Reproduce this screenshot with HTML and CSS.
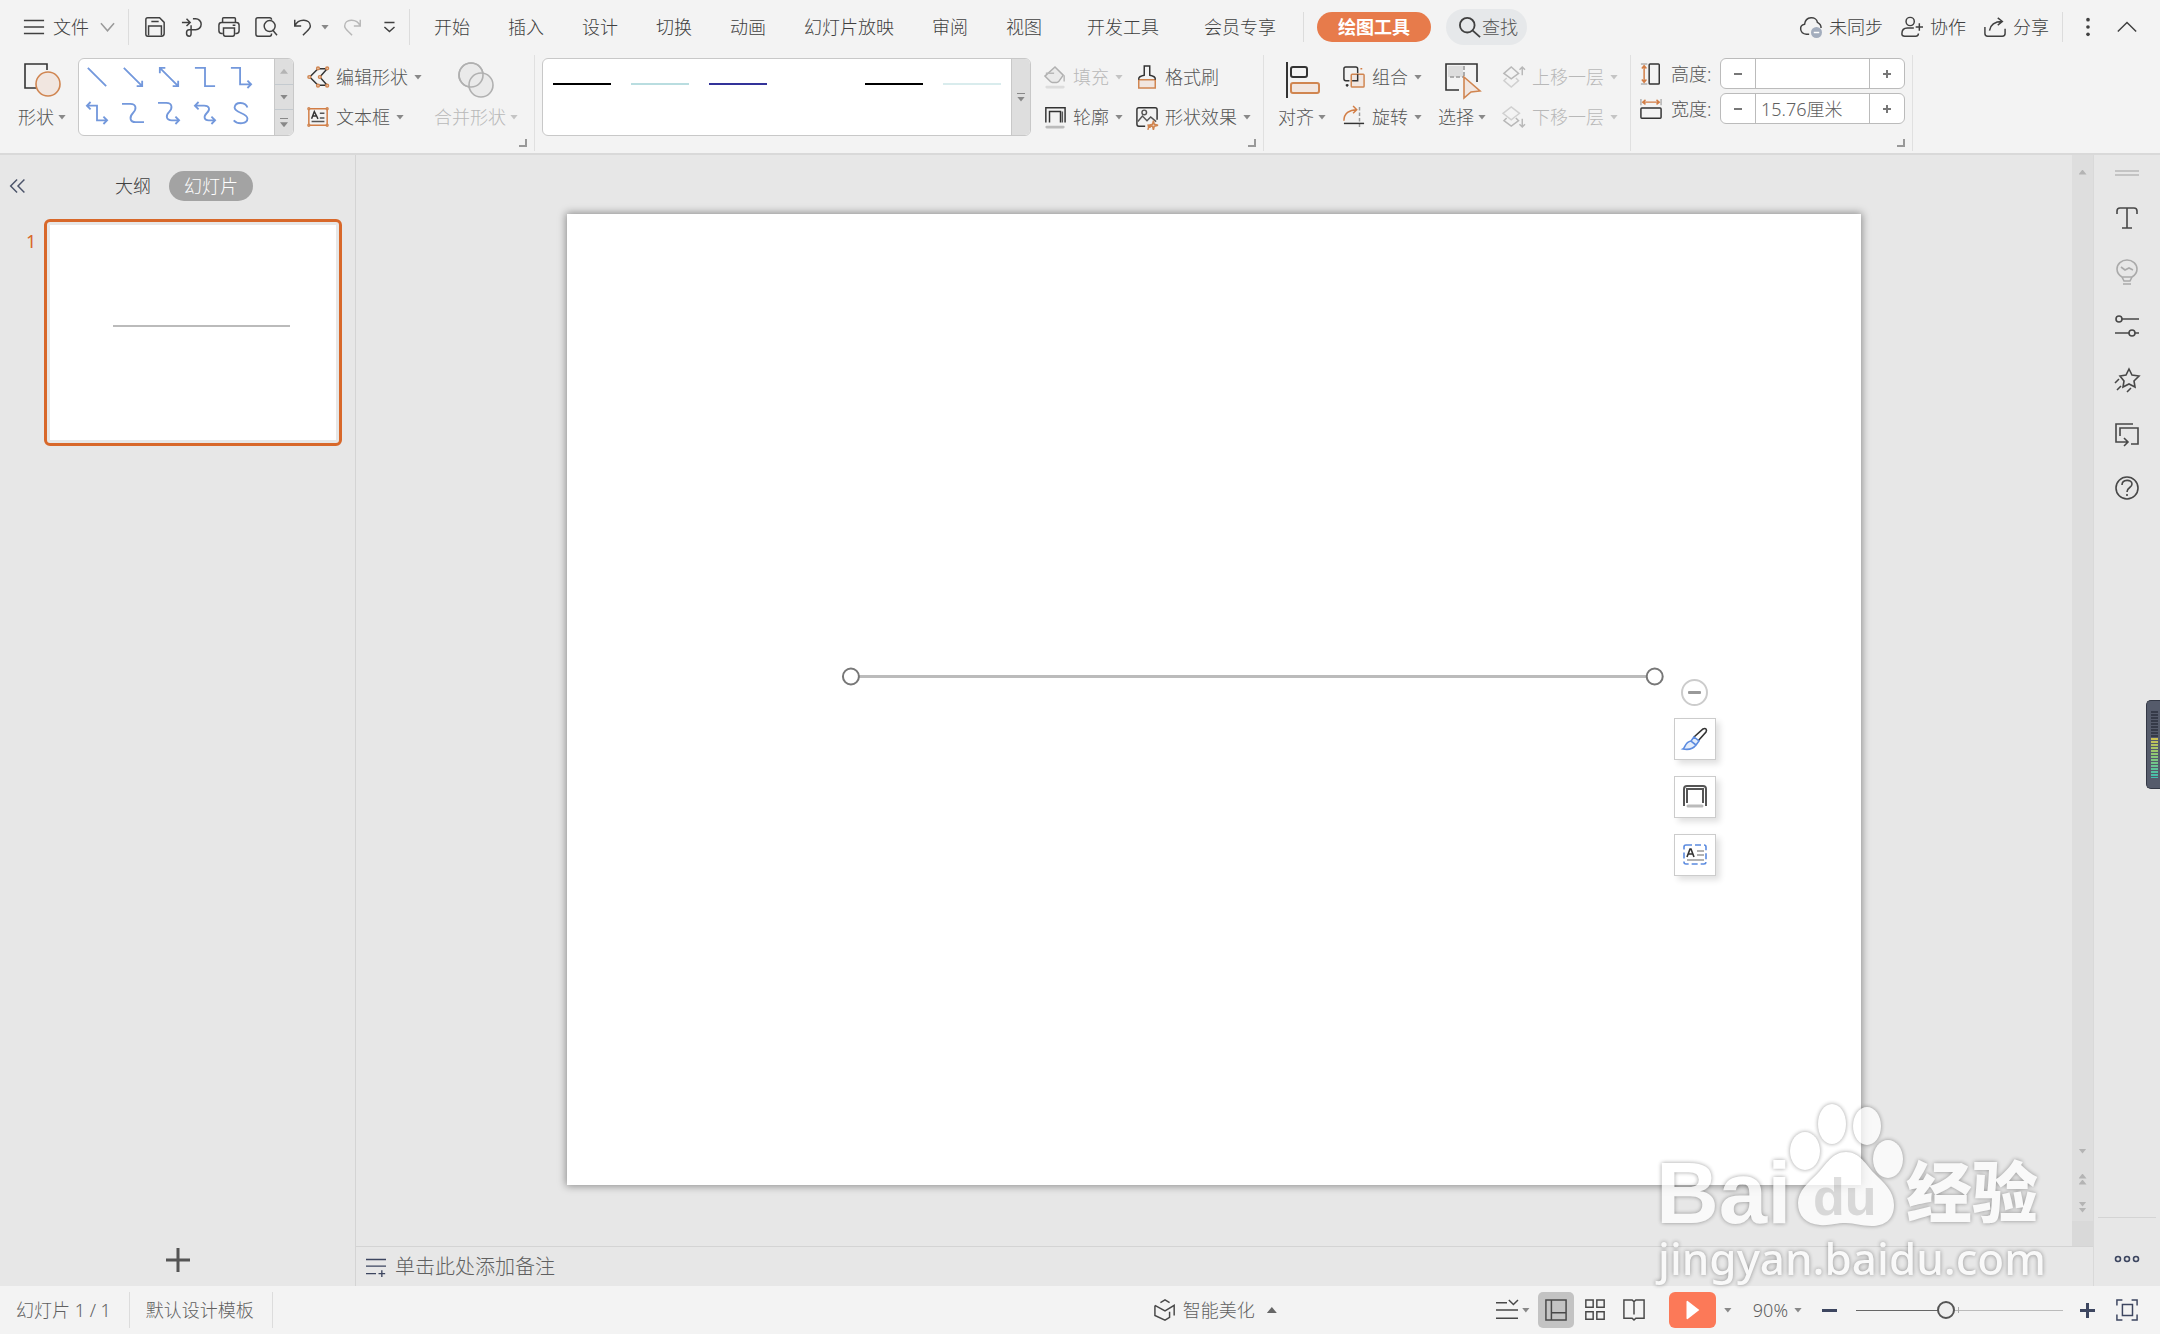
FILE: index.html
```html
<!DOCTYPE html>
<html lang="zh-CN">
<head>
<meta charset="utf-8">
<meta name="viewport" content="width=device-width, initial-scale=1">
<title>演示文稿 - 绘图工具</title>
<link rel="stylesheet" href="styles.css">
</head>
<body>
<header class="topbar">
  <button class="file-menu">
    <svg class="icon" viewBox="0 0 24 24"><path d="M1 5h22M1 12h22M1 19h22"/></svg>
    <span>文件</span>
    <svg class="chevron" viewBox="0 0 16 16"><path d="M1 4l7 8 7-8"/></svg>
  </button>
  <span class="divider"></span>
  <div class="quick-tools">
    <button class="tool" aria-label="保存"><svg class="icon" viewBox="0 0 24 24"><path d="M4 2h13l5 5v12q0 3-3 3H4q-2 0-2-2V4q0-2 2-2zM5 21V11h14v10M8 6h8"/></svg></button>
    <button class="tool" aria-label="输出为PDF"><svg class="icon" viewBox="0 0 24 24"><path d="M1 7h8M6 3l4 4-4 4M13 3h3a6 6 0 0 1 0 12H9q-3 0-3 3.500t3 3.500q2 0 2-3V10"/></svg></button>
    <button class="tool" aria-label="打印"><svg class="icon" viewBox="0 0 24 24"><path d="M5 7V3q0-1 1-1h12q1 0 1 1v4M5 19H4q-3 0-3-3v-6q0-3 3-3h16q3 0 3 3v6q0 3-3 3h-1M6 13h12v7q0 2-2 2H8q-2 0-2-2zM16 10h3"/></svg></button>
    <button class="tool" aria-label="打印预览"><svg class="icon" viewBox="0 0 24 24"><path d="M18 19v1q0 2-2 2H3q-2 0-2-2V4q0-2 2-2h13q2 0 2 2"/><circle cx="16" cy="11" r="6"/><path d="M19 15l5 6"/></svg></button>
    <button class="tool" aria-label="撤销"><svg class="icon" viewBox="0 0 24 24"><path d="M3 4v7h7M3 11c4-9 17-8 17 0 0 4-5 6-8 10"/></svg></button>
    <button class="tool-caret" aria-label="撤销列表"><i class="caret"></i></button>
    <button class="tool muted" aria-label="恢复"><svg class="icon" viewBox="0 0 24 24"><path d="M21 4v7h-7M21 11C17 2 4 3 4 11c0 4 5 6 8 10"/></svg></button>
    <button class="tool" aria-label="自定义快速访问工具栏"><svg class="icon" viewBox="0 0 24 24"><path d="M7 7h11M7 12l5.500 5 5.500-5"/></svg></button>
  </div>
  <span class="divider"></span>
  <nav class="tabs">
    <a href="#home">开始</a><a href="#insert">插入</a><a href="#design">设计</a><a href="#transition">切换</a><a href="#animation">动画</a><a href="#show">幻灯片放映</a><a href="#review">审阅</a><a href="#view">视图</a><a class="wide" href="#developer">开发工具</a><a class="wide" href="#member">会员专享</a>
  </nav>
  <span class="divider short"></span>
  <button class="context-tab">绘图工具</button>
  <button class="search"><svg class="icon" viewBox="0 0 24 24"><circle cx="9" cy="10" r="8"/><path d="M15 16l8 7"/></svg>查找</button>
  <div class="account">
    <button class="action"><svg class="icon" viewBox="0 0 24 24"><path d="M10 20H7C-1 19-1 10 5 9 6 0 18 0 19 7q4 2 4 6"/><circle class="badge" cx="18" cy="18" r="6"/><path class="badge-mark" d="M15 18h6"/></svg>未同步</button>
    <button class="action"><svg class="icon" viewBox="0 0 24 24"><circle cx="10" cy="6" r="4.500"/><path d="M14 13H7q-6 0-6 6v1q0 2 3 2h12q3 0 3-3M16 12h8M20 8v8"/></svg>协作</button>
    <button class="action"><svg class="icon" viewBox="0 0 24 24"><path d="M1 12v7q0 3 3 3h16q3 0 3-3v-5M6 16c1-7 5-10 14-10M15 2l5 4-5 4"/></svg>分享</button>
  </div>
  <span class="divider short"></span>
  <div class="window-tools">
    <button class="bare" aria-label="更多"><svg class="icon solid" viewBox="0 0 24 24"><circle cx="12" cy="4" r="2"/><circle cx="12" cy="12" r="2"/><circle cx="12" cy="20" r="2"/></svg></button>
    <button class="bare" aria-label="收起功能区"><svg class="icon" viewBox="0 0 24 24"><path d="M2 17L12 7l10 10"/></svg></button>
  </div>
</header>

<section class="ribbon" aria-label="绘图工具">
  <div class="group group-shapes">
    <button class="big">
      <svg class="icon-big" viewBox="0 0 36 36"><path class="ink" d="M23 8V2H1v24h11"/><circle class="accent-fill" cx="24" cy="22" r="12"/></svg>
      <span class="big-label">形状<i class="caret"></i></span>
    </button>
    <div class="gallery">
      <div class="shape-grid">
        <button aria-label="直线"><svg viewBox="0 0 24 24"><path d="M2 2l20 20"/></svg></button>
        <button aria-label="箭头"><svg viewBox="0 0 24 24"><path d="M2 2l20 20M22 16v6h-6"/></svg></button>
        <button aria-label="双箭头"><svg viewBox="0 0 24 24"><path d="M2 2l20 20M22 16v6h-6M8 2H2v6"/></svg></button>
        <button aria-label="肘形连接符"><svg viewBox="0 0 24 24"><path d="M1 2h11v20h11"/></svg></button>
        <button aria-label="肘形箭头连接符"><svg viewBox="0 0 24 24"><path d="M1 2h10v18h12M19 16l4 4-4 4"/></svg></button>
        <button aria-label="肘形双箭头连接符"><svg viewBox="0 0 24 24"><path d="M1 4h11v16h11M19 16l4 4-4 4M5 0L1 4l4 4"/></svg></button>
        <button aria-label="曲线连接符"><svg viewBox="0 0 24 24"><path d="M0 2h9c7 0 7 6 3 10s-4 10 3 10h9"/></svg></button>
        <button aria-label="曲线箭头连接符"><svg viewBox="0 0 24 24"><path d="M0 1h9c7 0 7 6 3 10s-3 9 3 9h8M19 16l4 4-4 4"/></svg></button>
        <button aria-label="曲线双箭头连接符"><svg viewBox="0 0 24 24"><path d="M1 4h10c6 0 7 4 3 8s-3 8 2 8h7M19 16l4 4-4 4M5 0L1 4l4 4"/></svg></button>
        <button aria-label="曲线"><svg viewBox="0 0 24 24"><path d="M19 6C17 0 6-1 5 6c0 6 14 6 14 12 0 6-10 7-15 2"/></svg></button>
      </div>
      <div class="gallery-scroll">
        <button aria-label="上一行"><i class="caret up pale"></i></button>
        <button aria-label="下一行"><i class="caret"></i></button>
        <button aria-label="全部形状"><i class="bar"></i><i class="caret"></i></button>
      </div>
    </div>
    <div class="stack">
      <button class="cmd">
        <svg class="icon" viewBox="0 0 24 24"><path class="ink" d="M12 3h10L14 12l8 9H12L3 12z"/><g class="accent-fill"><circle cx="12" cy="2.500" r="1.500"/><circle cx="22" cy="2.500" r="1.500"/><circle cx="14" cy="12" r="1.500"/><circle cx="22" cy="21.500" r="1.500"/><circle cx="12" cy="21.500" r="1.500"/><circle cx="2.500" cy="12" r="1.500"/></g></svg>
        <span>编辑形状</span><i class="caret"></i>
      </button>
      <button class="cmd">
        <svg class="icon" viewBox="0 0 24 24"><path class="accent" d="M2 3h20v18H2z"/><g class="accent-fill"><circle cx="2" cy="3" r="1"/><circle cx="22" cy="3" r="1"/><circle cx="2" cy="21" r="1"/><circle cx="22" cy="21" r="1"/></g><path class="ink" d="M5 14l3-8 4 8M6 11h4"/><path d="M14 8h5M14 13h5M5 17h14"/></svg>
        <span>文本框</span><i class="caret"></i>
      </button>
    </div>
    <button class="big muted" disabled>
      <svg class="icon-big" viewBox="0 0 36 36"><circle class="grey-fill" cx="13" cy="13" r="12"/><circle class="grey-fill" cx="23" cy="23" r="12"/><circle class="grey-line" cx="13" cy="13" r="12"/></svg>
      <span class="big-label">合并形状<i class="caret"></i></span>
    </button>
    <button class="launcher" aria-label="形状设置"></button>
  </div>

  <div class="group group-styles">
    <div class="gallery style-gallery">
      <div class="line-grid">
        <button class="line black" aria-label="黑色线条"></button>
        <button class="line teal" aria-label="青色线条"></button>
        <button class="line blue" aria-label="蓝色线条"></button>
        <button class="line white" aria-label="白色线条"></button>
        <button class="line black" aria-label="黑色细线"></button>
        <button class="line mint" aria-label="浅青线条"></button>
      </div>
      <div class="gallery-scroll"><button aria-label="全部样式"><i class="bar"></i><i class="caret"></i></button></div>
    </div>
    <div class="stack">
      <button class="cmd muted" disabled>
        <svg class="icon" viewBox="0 0 24 24"><path class="grey-fill" d="M1 11L12 1l9 9-5 7q-1 1-2 1H9q-1 0-2-1z"/><path d="M2 8h9M22 10v7"/><path class="under pale-under" d="M3 23h18"/></svg>
        <span>填充</span><i class="caret"></i>
      </button>
      <button class="cmd">
        <svg class="icon" viewBox="0 0 24 24"><path class="ink" d="M2 18V2h21v16M6 18V6h12v12"/><path d="M20 6v12"/><path class="under" d="M3 23h18"/></svg>
        <span>轮廓</span><i class="caret"></i>
      </button>
    </div>
    <div class="stack">
      <button class="cmd">
        <svg class="icon" viewBox="0 0 24 24"><path class="accent-fill" d="M3 15h18v9H3z"/><path class="ink" d="M3 15v-1q0-3 6-4V0h6v10q6 1 6 4v1"/></svg>
        <span>格式刷</span>
      </button>
      <button class="cmd">
        <svg class="icon" viewBox="0 0 24 24"><path class="ink" d="M10 22H3q-2 0-2-2V4q0-2 2-2h18q2 0 2 2v11"/><circle cx="9" cy="7" r="2.500"/><path d="M2 17l5-6 5 5 4-4 6 5"/><path class="accent-fill" d="M19 16l1 4 4 1-4 1-1 4-1-4-4-1 4-1zM13 20l.6 2.400L16 23l-2.400.6L13 26"/></svg>
        <span>形状效果</span><i class="caret"></i>
      </button>
    </div>
    <button class="launcher" aria-label="样式设置"></button>
  </div>

  <div class="group group-arrange">
    <button class="big">
      <svg class="icon-big" viewBox="0 0 36 36"><path class="ink thick" d="M3 0v36"/><rect class="ink thick" x="7" y="5" width="16" height="10" rx="2"/><rect class="accent-fill thick" x="7" y="21" width="28" height="10" rx="2"/></svg>
      <span class="big-label">对齐<i class="caret"></i></span>
    </button>
    <div class="stack">
      <button class="cmd">
        <svg class="icon" viewBox="0 0 24 24"><path class="ink" d="M7 16H3q-2 0-2-2V3q0-2 2-2h11q2 0 2 2v5M3 21h3M4.500 19.500v3"/><rect class="accent-fill" x="9" y="9" width="14" height="14" rx="1"/><path class="ink" d="M10 16h6V9"/><path class="accent" d="M19 3h2"/></svg>
        <span>组合</span><i class="caret"></i>
      </button>
      <button class="cmd">
        <svg class="icon" viewBox="0 0 24 24"><path class="accent" d="M1 16C1 8 7 4 15 4M11 0l4 4-4 4"/><path class="dashed" d="M18 1v23"/><path class="ink" d="M1 19h22"/></svg>
        <span>旋转</span><i class="caret"></i>
      </button>
    </div>
    <button class="big">
      <svg class="icon-big" viewBox="0 0 36 36"><path class="shade" d="M4 4h15v11H4z"/><path class="ink" d="M15 28H2V2h31v18"/><path class="dashed" d="M20 4v11M6 15h14"/><path class="accent-fill" d="M20 15l16 14-9 1-7 6z"/></svg>
      <span class="big-label">选择<i class="caret"></i></span>
    </button>
    <div class="stack">
      <button class="cmd muted" disabled>
        <svg class="icon" viewBox="0 0 24 24"><path d="M1 8l8-7 8 7-8 6zM21 10V1M18 4l3-3 3 3"/><path class="pale-line" d="M4 13l-3 3 8 7 8-7-3-3"/></svg>
        <span>上移一层</span><i class="caret"></i>
      </button>
      <button class="cmd muted" disabled>
        <svg class="icon" viewBox="0 0 24 24"><path class="pale-line" d="M0 8l9-7 9 7-9 7z"/><path d="M4 13l-3 3 8 6 8-6-3-3M21 14v9M18 20l3 3 3-3"/></svg>
        <span>下移一层</span><i class="caret"></i>
      </button>
    </div>
  </div>

  <div class="group group-size">
    <div class="size-row">
      <svg class="icon" viewBox="0 0 24 24"><path class="grey-line" d="M1 1h7M1 23h7"/><path class="accent" d="M4.500 3v18M2 6l2.500-3L7 6M2 18l2.500 3L7 18"/><rect class="ink" x="10" y="1" width="11" height="22" rx="1"/></svg>
      <label for="height">高度:</label>
      <div class="spin"><button aria-label="减小高度"><i class="minus"></i></button><input id="height" type="text" value=""><button aria-label="增大高度"><i class="plus"></i></button></div>
    </div>
    <div class="size-row">
      <svg class="icon" viewBox="0 0 24 24"><path class="grey-line" d="M1 1v7M23 1v7"/><path class="accent" d="M3 4.500h18M6 2L3 4.500 6 7M18 2l3 2.500L18 7"/><rect class="ink" x="1" y="11" width="22" height="11" rx="1"/></svg>
      <label for="width">宽度:</label>
      <div class="spin"><button aria-label="减小宽度"><i class="minus"></i></button><input id="width" type="text" value="15.76厘米"><button aria-label="增大宽度"><i class="plus"></i></button></div>
    </div>
    <button class="launcher" aria-label="大小设置"></button>
  </div>
</section>

<main class="workspace">
  <aside class="slides-panel">
    <div class="panel-head">
      <button class="bare collapse" aria-label="收起"><svg class="icon" viewBox="0 0 24 24"><path d="M11 5l-7 7 7 7M19 5l-7 7 7 7"/></svg></button>
      <button class="bare outline-tab">大纲</button>
      <button class="slides-tab">幻灯片</button>
    </div>
    <ol class="thumbs">
      <li><span class="number">1</span><a class="thumb" href="#slide-1" aria-label="幻灯片 1"><span class="thumb-slide"><i></i></span></a></li>
    </ol>
    <button class="bare add-slide" aria-label="新建幻灯片"><svg class="icon" viewBox="0 0 24 24"><path d="M0 12h24M12 0v24"/></svg></button>
  </aside>

  <div class="editor">
    <div class="stage">
      <div class="canvas">
        <article class="slide" id="slide-1">
          <svg class="drawing" viewBox="0 0 1295 971"><path d="M284 462.500h804"/><circle cx="284" cy="462.500" r="8"/><circle cx="1088" cy="462.500" r="8"/></svg>
          <div class="float-tools">
            <button class="float-close" aria-label="收起工具"><i></i></button>
            <button class="float-button" aria-label="形状样式"><svg class="icon" viewBox="0 0 24 24"><path class="ink" d="M11 10l9-8q2-1 3 0t0 3l-8 9"/><path class="blue-fill" d="M11 10l5 4-3 4-5-4zM8 14l5 4c-3 4-8 5-13 4 2-1 2-7 8-8z"/></svg></button>
            <button class="float-button" aria-label="形状轮廓"><svg class="icon" viewBox="0 0 24 24"><path class="frame" d="M1 21V4q0-3 3-3h16q3 0 3 3v17M4 18V4h16v14"/><path class="under" d="M5 21h14"/></svg></button>
            <button class="float-button" aria-label="编辑文字"><svg class="icon" viewBox="0 0 24 24"><rect class="blue-dash" x="1" y="2" width="22" height="19" rx="2"/><path class="ink" d="M4 14l3-8h1l3 8M5 11h5"/><path d="M14 8h7M14 12h7M4 17h17"/></svg></button>
          </div>
        </article>
      </div>
      <div class="scrollbar">
        <button aria-label="向上滚动"><i class="caret up pale"></i></button>
        <span class="scroll-track"></span>
        <button aria-label="向下滚动"><i class="caret pale"></i></button>
        <button aria-label="上一张"><i class="caret up pale"></i><i class="caret up pale"></i></button>
        <button aria-label="下一张"><i class="caret pale"></i><i class="caret pale"></i></button>
        <span class="scroll-end"></span>
      </div>
    </div>
    <div class="notes">
      <svg class="icon navy" viewBox="0 0 24 24"><path d="M0 3h24M0 11h24M0 20h12M15 20h8M19 16v8"/></svg>
      <input type="text" aria-label="备注" placeholder="单击此处添加备注">
    </div>
  </div>

  <aside class="sidebar">
    <span class="grip"></span>
    <button class="bare" aria-label="文字"><svg class="icon" viewBox="0 0 24 24"><path d="M2 8V5q0-3 3-3h14q3 0 3 3v3M12 2v20M7 22h10"/></svg></button>
    <button class="bare muted" aria-label="灵感"><svg class="icon" viewBox="0 0 24 24"><path d="M7 17q-5-3-5-8a10 9 0 0 1 20 0q0 5-5 8zM7 17l2 4h6l2-4M8 24h8M6 7l4 3 4-2 4 2"/></svg></button>
    <button class="bare" aria-label="属性"><svg class="icon" viewBox="0 0 24 24"><circle cx="4" cy="5" r="3"/><path d="M7 5h17M0 19h14M20 19h4"/><circle cx="17" cy="19" r="3"/></svg></button>
    <button class="bare" aria-label="动画"><svg class="icon" viewBox="0 0 24 24"><path d="M14 1l3 6 7 1-5 5 1 6-6-3-6 3 1-6-4-5 6-1zM4 11l-4 4M6 18l-4 4M16 20l-4 4"/></svg></button>
    <button class="bare" aria-label="切换"><svg class="icon" viewBox="0 0 24 24"><path d="M18 2H1v18h12M9 16l4 4-4 4M5 14V6h18v16h-7"/></svg></button>
    <button class="bare" aria-label="帮助"><svg class="icon" viewBox="0 0 24 24"><circle cx="12" cy="12" r="11"/><path d="M7 9c0-6 10-6 10-1 0 4-5 3-5 8M12 18v2"/></svg></button>
    <button class="bare more" aria-label="更多"><svg class="icon navy" viewBox="0 0 24 24"><circle cx="3" cy="12" r="2.500"/><circle cx="12" cy="12" r="2.500"/><circle cx="21" cy="12" r="2.500"/></svg></button>
    <span class="meter"><i></i></span>
  </aside>

  <svg class="watermark" viewBox="0 0 400 205" aria-hidden="true">
    <text class="wm-bai" x="6" y="128">Bai</text>
    <ellipse cx="155" cy="56" rx="15" ry="19"/><ellipse cx="182" cy="29" rx="14" ry="20"/><ellipse cx="217" cy="31" rx="14" ry="19"/><ellipse cx="238" cy="64" rx="15" ry="19"/>
    <path d="M196 57C210 57 216 70 224 78C234 88 244 96 244 110C244 125 234 131 222 131C210 131 205 128 196 128C185 128 180 131 170 130C156 129 148 121 148 108C148 96 158 88 168 78C176 70 182 57 196 57Z"/>
    <text class="wm-du" x="163" y="120">du</text>
    <text class="wm-cjk" x="256" y="122">经验</text>
    <text class="wm-url" x="8" y="180">jingyan.baidu.com</text>
  </svg>
</main>

<footer class="status">
  <span class="status-item">幻灯片 1 / 1</span>
  <span class="status-item">默认设计模板</span>
  <button class="smart"><svg class="icon" viewBox="0 0 24 24"><path d="M7 4l5-3 5 3M1 7v11l11 5 5-3v-6M1 7l11 6 10-6v11"/></svg>智能美化<i class="caret up"></i></button>
  <div class="view-tools">
    <button class="view-menu" aria-label="视图选项"><svg class="icon" viewBox="0 0 24 24"><path d="M0 4h12M0 12h24M0 21h24M14 1l5 5 5-5"/></svg><i class="caret"></i></button>
    <button class="view active" aria-label="普通视图"><svg class="icon" viewBox="0 0 24 24"><path d="M1 1h22v22H1zM7 1v22M7 15h16"/></svg></button>
    <button class="view" aria-label="幻灯片浏览"><svg class="icon" viewBox="0 0 24 24"><path d="M2 1h8v8H2zM14 1h8v8h-8zM2 14h8v8H2zM14 14h8v8h-8z"/></svg></button>
    <button class="view" aria-label="阅读视图"><svg class="icon" viewBox="0 0 24 24"><path d="M12 3v14M12 3l-2-2H1v20h9l2 2 2-2h9V1h-9z"/></svg></button>
    <button class="play" aria-label="放映"><svg viewBox="0 0 24 24"><path d="M6 3q0-1 1-1l13 10L7 22q-1 0-1-1z"/></svg></button>
    <button class="bare play-caret" aria-label="放映选项"><i class="caret"></i></button>
    <button class="zoom-level">90%<i class="caret"></i></button>
    <button class="bare step navy" aria-label="缩小"><i class="minus"></i></button>
    <input class="zoom-slider" type="range" min="0" max="100" value="43" aria-label="缩放">
    <button class="bare step navy" aria-label="放大"><i class="plus"></i></button>
    <button class="bare fit" aria-label="适应窗口"><svg class="icon navy" viewBox="0 0 24 24"><path d="M7 1H1v6M17 1h6v6M1 17v6h6M23 17v6h-6M7 6h11v12H7z"/></svg></button>
  </div>
</footer>
</body>
</html>
```
FILE: styles.css
```css
* { box-sizing: border-box; }

body {
  margin: 0;
  min-height: 100vh;
  display: flex;
  flex-direction: column;
  background: #e7e7e7;
  color: #404040;
  font: 300 18px/24px "Noto Sans", "Noto Sans CJK SC", sans-serif;
  white-space: nowrap;
}

button, input { font: inherit; color: inherit; }
button { display: flex; align-items: center; justify-content: center; margin: 0; padding: 0; border: 0; background: none; }
a { color: inherit; text-decoration: none; }

svg { display: block; overflow: visible; flex: none; fill: none; stroke: currentColor; stroke-width: 1.6; }
.icon { width: 22px; height: 22px; margin: 0 1px; }
.icon-big { width: 36px; height: 36px; }
.solid { fill: currentColor; stroke: none; }
.ink { stroke: #333; }
.frame { stroke: #555; stroke-width: 2; }
.thick { stroke-width: 2; }
.accent { stroke: #d27d45; }
.accent-fill { stroke: #d08550; fill: #f1e6e0; }
.grey-fill { stroke: #b0b0b0; fill: #eaeaea; }
.grey-line { stroke: #b0b0b0; }
.pale-line { stroke: #d0d0d0; }
.shade { fill: #ddd; stroke: none; }
.dashed { stroke: #999; stroke-dasharray: 4 2; }
.under { stroke: #bbb; stroke-width: 3; stroke-linecap: round; }
.pale-under { stroke: #dcdcdc; }
.blue-fill { stroke: #5b8be0; fill: #e4edfb; }
.blue-dash { stroke: #5b8be0; stroke-dasharray: 6 3; }
.badge { fill: #a3adbd; stroke: none; }
.badge-mark { stroke: #fff; }
.navy { color: #3d4660; }

.caret { flex: none; width: 8px; height: 5px; background: #888; clip-path: polygon(0 0, 100% 0, 50% 100%); }
.caret.up { clip-path: polygon(0 100%, 100% 100%, 50% 0); }
.caret.pale { background: #b4b4b4; }
.muted { color: #b8b8b8; }
.muted .caret { background: #c4c4c4; }
.minus, .plus { width: 8px; height: 2px; background: currentColor; position: relative; }
.plus::after { content: ""; position: absolute; inset: 0; background: inherit; transform: rotate(90deg); }

/* top bar */
.topbar { display: flex; align-items: center; height: 54px; padding: 0 21px 0 22px; background: #f3f3f3; }
.divider { width: 1px; height: 36px; background: #dcdcdc; }
.divider.short { height: 30px; }
.file-menu { gap: 7px; margin-right: 13px; }
.chevron { width: 15px; height: 16px; margin-left: 4px; color: #999; }
.quick-tools { display: flex; align-items: center; margin: 0 2px 0 7px; }
.tool { width: 37px; height: 36px; }
.tool-caret { width: 12px; height: 36px; justify-content: flex-start; }
.tabs { display: flex; gap: 38px; margin: 0 27px 0 24px; }
.tabs .wide { margin-left: 7px; }
.context-tab { height: 30px; margin-left: 13px; padding: 0 21px; border-radius: 15px; background: #e77b4b; color: #fff; font-weight: 700; }
.search { height: 36px; margin-left: 15px; padding: 0 9px 0 12px; border-radius: 18px; background: #e6e8ea; color: #555; }
.search svg { color: #404040; stroke-width: 2; }
.account { display: flex; gap: 17px; margin: 0 13px 0 auto; }
.action { gap: 6px; }
.window-tools { display: flex; gap: 15px; margin-left: 13px; }

/* ribbon */
.ribbon { display: flex; height: 101px; background: #f3f3f3; border-bottom: 2px solid #d9d9d9; color: #555; }
.group { position: relative; display: flex; align-items: flex-start; gap: 12px; height: 96px; margin-top: 1px; padding-top: 2px; border-right: 1px solid #e0e0e0; }
.group-shapes { padding-left: 18px; padding-right: 16px; }
.group-styles { padding-left: 7px; padding-right: 12px; }
.group-arrange { gap: 16px; padding-left: 14px; padding-right: 12px; }
.group-size { flex-direction: column; gap: 4px; padding: 3px 7px 0 8px; }
.big { flex-direction: column; height: 80px; padding-top: 5px; justify-content: flex-start; }
.big-label { display: flex; align-items: center; gap: 4px; margin-top: 7px; }
.stack { display: grid; grid-template-rows: 40px 40px; justify-items: start; }
.cmd { gap: 6px; height: 40px; }
.launcher { position: absolute; right: 7px; bottom: 4px; width: 8px; height: 8px; border: solid #999; border-width: 0 2px 2px 0; }

.gallery { display: flex; width: 216px; height: 78px; margin-top: 1px; border: 1px solid #c8c8c8; border-radius: 6px; background: #fff; overflow: hidden; }
.style-gallery { width: 489px; }
.shape-grid { flex: 1; display: grid; grid-template-columns: repeat(5, 36px); grid-template-rows: 36px 36px; }
.shape-grid svg { width: 22px; height: 22px; color: #7398dc; stroke-width: 2; }
.gallery-scroll { display: flex; flex-direction: column; width: 19px; border-left: 1px solid #c8c8c8; background: #dedede; }
.gallery-scroll button { flex: 1; flex-direction: column; gap: 3px; }
.gallery-scroll button + button { border-top: 1px solid #c4cacf; }
.bar { width: 8px; height: 1px; background: #888; }
.line-grid { flex: 1; display: grid; grid-template-columns: repeat(6, 58px); gap: 20px; padding: 24px 0 0 10px; align-items: start; }
.line { height: 2px; }
.black { background: #000; }
.teal { background: #b9dde0; }
.blue { background: #333399; }
.white { background: #fff; }
.mint { background: #d9eced; }

.size-row { display: flex; align-items: center; height: 31px; }
.size-row label { width: 49px; margin-left: 8px; }
.spin { display: flex; width: 185px; height: 31px; border: 1px solid #bbb; border-radius: 6px; background: #fff; overflow: hidden; }
.spin button { width: 34px; color: #777; }
.spin input { flex: 1; min-width: 0; padding: 0 5px; border: solid #bbb; border-width: 0 1px; outline: 0; color: #606060; }

/* work area */
.workspace { position: relative; flex: 1; display: flex; background: #e7e7e7; }
.bare { padding: 0; }
.slides-panel { width: 356px; display: flex; flex-direction: column; border-right: 1px solid #d4d4d4; padding-bottom: 14px; }
.panel-head { display: flex; align-items: center; height: 30px; margin: 16px 0 18px 6px; }
.collapse { color: #4c546a; }
.outline-tab { margin: 0 18px 0 85px; }
.slides-tab { height: 30px; padding: 0 15px; border-radius: 15px; background: #a3a3a3; color: #fff; }
.thumbs { list-style: none; margin: 0; padding: 0 13px 0 26px; }
.thumbs li { display: flex; }
.number { width: 18px; padding-top: 10px; color: #d8682a; font-weight: 400; }
.thumb { flex: 1; padding: 3px; border: 3px solid #d8682a; border-radius: 6px; }
.thumb-slide { display: flex; align-items: flex-start; justify-content: flex-start; aspect-ratio: 4 / 3; background: #fff; }
.thumb-slide i { width: 62%; height: 2px; margin: 35% 0 0 22%; background: #bbb; }
.add-slide { align-self: center; margin-top: auto; color: #555; }
.add-slide .icon { width: 24px; height: 24px; stroke-width: 3; }

.editor { flex: 1; min-width: 0; display: flex; flex-direction: column; }
.stage { flex: 1; display: flex; }
.canvas { flex: 1; display: flex; justify-content: center; padding: 59px 0 61px; }
.slide { position: relative; aspect-ratio: 4 / 3; background: #fff; box-shadow: 0 0 8px 1px rgba(0, 0, 0, .4); }
.drawing { width: 100%; height: 100%; stroke: #bbb; stroke-width: 3; }
.drawing circle { fill: #fff; stroke: #777; stroke-width: 2; }
.float-tools { position: absolute; left: 85.500%; top: 465px; display: flex; flex-direction: column; align-items: center; gap: 16px; }
.float-close { width: 27px; height: 27px; margin-bottom: -4px; border: 2px solid #ccc; border-radius: 50%; }
.float-close i { width: 13px; height: 3px; border-radius: 1px; background: #999; }
.float-button { width: 42px; height: 42px; border: 1px solid #ccc; background: #fff; box-shadow: 4px 4px 6px rgba(0, 0, 0, .12); color: #999; }
.float-button .icon { width: 26px; height: 24px; }

.scrollbar { width: 21px; display: flex; flex-direction: column; background: #dedede; }
.scrollbar button { flex-direction: column; gap: 1px; height: 28px; }
.scrollbar button:first-child { height: 34px; }
.scroll-track { flex: 1; }
.scroll-end { height: 25px; background: #d9d9d9; }
.notes { display: flex; align-items: center; gap: 6px; height: 40px; padding: 0 7px; border-top: 1px solid #d4d4d4; }
.notes .icon { width: 24px; height: 20px; }
.notes input { flex: 1; min-width: 0; padding: 0; border: 0; outline: 0; background: none; font-size: 20px; }
.notes input::placeholder { color: #606060; opacity: 1; }

.sidebar { position: relative; width: 67px; display: flex; flex-direction: column; align-items: center; gap: 30px; padding-top: 15px; border-left: 1px solid #d9d9d9; color: #484848; }
.sidebar .bare { height: 24px; }
.sidebar .icon { width: 24px; height: 24px; margin: 0; }
.sidebar .muted { color: #aaa; }
.grip { width: 24px; height: 6px; border: solid #c4c4c4; border-width: 2px 0; }
.sidebar .more { align-self: stretch; height: 69px; margin: auto 4px 0; padding-top: 13px; border-top: 1px solid #d4d4d4; }
.meter { position: absolute; right: 0; top: calc(50% - 21px); width: 14px; height: 89px; padding: 10px 2px 10px 4px; border: 1px solid #333845; border-right: 0; border-radius: 5px 0 0 5px; background: #555b6b; }
.meter i { display: block; height: 100%; background: repeating-linear-gradient(transparent 0 2px, #555b6b 2px 3px), linear-gradient(#353a48 0 39%, #d2c050 39%, #8fc973 65%, #3fbfb0); }

.watermark { position: absolute; right: 110px; bottom: -14px; width: 400px; height: 205px; z-index: 1; pointer-events: none; fill: #fff; stroke: none; opacity: .75; filter: drop-shadow(0 0 2px rgba(0, 0, 0, .5)); }
.wm-bai { font: 700 87px "Liberation Sans", sans-serif; }
.wm-du { font: 700 52px "Liberation Sans", sans-serif; fill: #d4d4d4; }
.wm-cjk { font: 900 66px "Noto Sans CJK SC", sans-serif; }
.wm-url { font: 500 44px "Noto Sans", sans-serif; }

/* status bar */
.status { display: flex; align-items: center; height: 48px; padding-right: 21px; background: #f3f3f3; color: #606060; }
.status-item { display: flex; align-items: center; height: 36px; padding: 0 18px 0 16px; border-right: 1px solid #dcdcdc; }
.smart { gap: 6px; margin-left: auto; }
.smart .icon { color: #484848; }
.smart .caret { width: 10px; height: 6px; margin-left: 6px; background: #666; }
.view-tools { display: flex; align-items: center; margin-left: 218px; color: #484848; }
.view-menu { gap: 3px; margin-right: 8px; }
.view { width: 36px; height: 36px; border-radius: 5px; margin-right: 3px; }
.view.active { background: #c3c3c3; }
.play { width: 47px; height: 36px; margin-left: 14px; border-radius: 6px; background: #fc7958; }
.play svg { width: 22px; height: 22px; fill: #fff; stroke: none; }
.play-caret { margin-left: 8px; }
.zoom-level { gap: 6px; margin: 0 20px 0 21px; color: #606060; }
.step .minus, .step .plus { width: 15px; height: 3px; }
.zoom-slider { width: 207px; height: 20px; margin: 0 17px 0 19px; appearance: none; background: linear-gradient(#aaa, #aaa) 102px 50% / 1px 6px no-repeat, linear-gradient(90deg, #666 43%, #bbb 43%) 0 50% / 100% 1px no-repeat; }
.zoom-slider::-webkit-slider-thumb { appearance: none; width: 18px; height: 18px; border: 2px solid #555; border-radius: 50%; background: #eee; }
.fit { margin-left: 20px; }
```
